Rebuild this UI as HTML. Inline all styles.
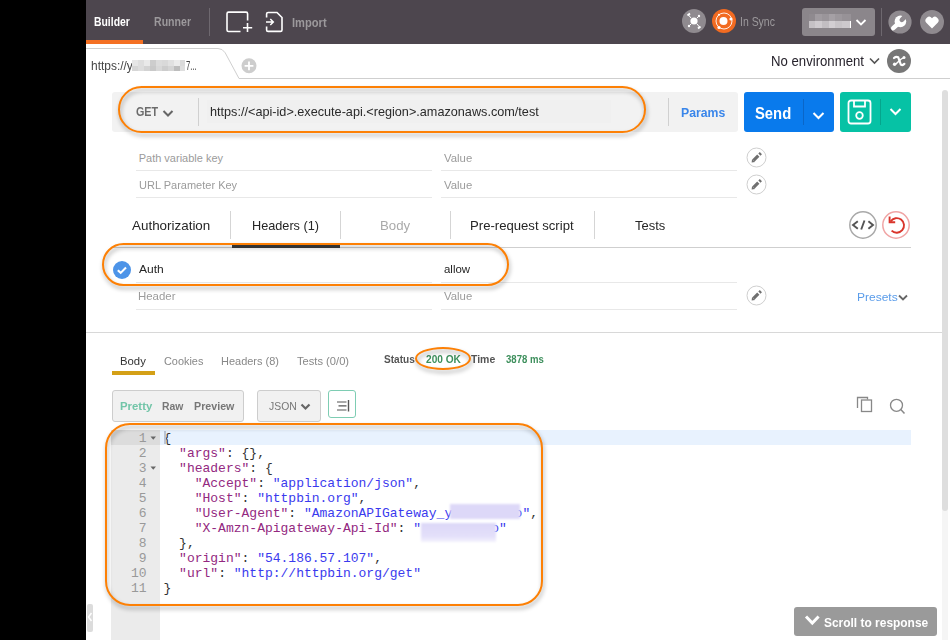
<!DOCTYPE html><html><head><meta charset="utf-8"><style>
html,body{margin:0;padding:0;width:950px;height:640px;overflow:hidden;background:#fff;position:relative;font-family:"Liberation Sans",sans-serif;}
.t{position:absolute;white-space:pre;line-height:1;}
.r{position:absolute;}
.ln{position:absolute;left:111px;width:35.6px;text-align:right;font-family:"Liberation Mono",monospace;font-size:13px;line-height:15px;color:#999;}
.cl{position:absolute;left:163.5px;font-family:"Liberation Mono",monospace;font-size:13px;line-height:15px;white-space:pre;}
.ann{position:absolute;box-sizing:border-box;border:3px solid #fd8005;filter:drop-shadow(1px 3px 2px rgba(0,0,0,.35));}
</style></head><body><div class="r" style="left:0px;top:0px;width:86px;height:640px;background:#000;"></div>
<div class="r" style="left:86px;top:0px;width:864px;height:44px;background:#4d464e;"></div>
<div class="r" style="left:86px;top:40px;width:57px;height:4px;background:#f47023;"></div>
<div class="t" style="left:94.40px;top:15.80px;font-size:12px;color:#fff;font-weight:bold;transform:scaleX(0.8667);transform-origin:0 0;">Builder</div>
<div class="t" style="left:154.00px;top:15.80px;font-size:12px;color:#9c999c;font-weight:bold;transform:scaleX(0.8810);transform-origin:0 0;">Runner</div>
<div class="r" style="left:209px;top:8px;width:1px;height:28px;background:#6e686f;"></div>
<svg style="position:absolute;left:224px;top:10px;" width="30" height="26" viewBox="0 0 30 26"><path d="M23.6 10.5 V3.7 a1.6 1.6 0 0 0 -1.6 -1.6 H4.6 a1.6 1.6 0 0 0 -1.6 1.6 V19.9 a1.6 1.6 0 0 0 1.6 1.6 H16.5" fill="none" stroke="#fff" stroke-width="1.6"/><path d="M23.5 13 V22 M19 17.8 H28.2" stroke="#fff" stroke-width="1.6"/></svg>
<svg style="position:absolute;left:262px;top:10px;" width="24" height="26" viewBox="0 0 24 26"><path d="M4.6 7.5 V4 a1.5 1.5 0 0 1 1.5 -1.5 H15 L20 7.5 V19.9 a1.5 1.5 0 0 1 -1.5 1.5 H6.1 a1.5 1.5 0 0 1 -1.5 -1.5 V16.5" fill="none" stroke="#fff" stroke-width="1.6"/><path d="M4 12 H11.3 M8.3 9 L11.3 12 L8.3 15" fill="none" stroke="#fff" stroke-width="1.5"/></svg>
<div class="t" style="left:291.70px;top:16.50px;font-size:12px;color:#9c999c;font-weight:bold;transform:scaleX(0.9270);transform-origin:0 0;">Import</div>
<svg style="position:absolute;left:682px;top:9px;" width="24" height="24" viewBox="0 0 24 24"><circle cx="12" cy="12" r="12" fill="#8f8a8f"/><circle cx="12" cy="12" r="3.6" fill="#fff"/><path d="M5.5 6.5 L8 4.5 M16 19.5 L18.5 17.5" stroke="#fff" stroke-width="2"/><path d="M9 9 L6.5 6 M15 15 L17.5 18 M15 9 L17 7 M9 15 L7 17" stroke="#fff" stroke-width="1"/><circle cx="17" cy="7" r="1.2" fill="#fff"/><circle cx="7" cy="17" r="1.2" fill="#fff"/></svg>
<svg style="position:absolute;left:712px;top:9px;" width="24" height="24" viewBox="0 0 24 24"><circle cx="12" cy="12" r="12" fill="#f26b21"/><circle cx="12" cy="12" r="8" fill="none" stroke="#fff" stroke-width="0.9"/><circle cx="11.5" cy="12" r="4" fill="#fff"/><circle cx="19" cy="10" r="1.6" fill="#fff"/><circle cx="7" cy="18.5" r="1.6" fill="#fff"/><circle cx="7" cy="5.8" r="1" fill="#fff"/></svg>
<div class="t" style="left:739.93px;top:16.00px;font-size:12px;color:#9c999c;font-weight:normal;transform:scaleX(0.8718);transform-origin:0 0;">In Sync</div>
<div class="r" style="left:802px;top:8px;width:73px;height:28px;background:#8b868b;border-radius:3px;"></div>
<div class="r" style="left:809px;top:14px;width:42px;height:7px;background:linear-gradient(90deg,#8f8a8f 0 6px,#a09ba0 6px 13px,#9a959a 13px 20px,#a5a0a5 20px 26px,#9d989d 26px 33px,#979297 33px 42px)"></div>
<div class="r" style="left:809px;top:21px;width:42px;height:7px;background:linear-gradient(90deg,#c5c1c5 0 6px,#cfcbcf 6px 13px,#c2bec2 13px 20px,#d2ced2 20px 26px,#c8c4c8 26px 33px,#cdc9cd 33px 41px,#fff 41px 42px)"></div>
<svg style="position:absolute;left:855px;top:18px;" width="12" height="9" viewBox="0 0 12 9"><path d="M1.5 2 L6 6.5 L10.5 2" fill="none" stroke="#fff" stroke-width="1.8"/></svg>
<div class="r" style="left:881px;top:8px;width:1px;height:28px;background:#6e686f;"></div>
<svg style="position:absolute;left:888px;top:10px;" width="24" height="24" viewBox="0 0 24 24"><circle cx="12" cy="12" r="11.6" fill="#8f8a8f"/><path d="M5.2 18.2 L11.5 12.5" stroke="#fff" stroke-width="4.4" stroke-linecap="round"/><circle cx="12.4" cy="11.4" r="5.8" fill="#fff"/><path d="M13.8 9.8 L17.6 6" stroke="#8f8a8f" stroke-width="4.6" stroke-linecap="round"/></svg>
<svg style="position:absolute;left:920px;top:10px;" width="24" height="24" viewBox="0 0 24 24"><circle cx="12" cy="12" r="12" fill="#8f8a8f"/><path d="M12 18.5 L6.3 12.8 a3.3 3.3 0 0 1 5.7 -4.6 a3.3 3.3 0 0 1 5.7 4.6 Z" fill="#fff"/></svg>
<svg style="position:absolute;left:86px;top:44px;" width="864" height="40" viewBox="0 0 864 40"><path d="M0 4.5 H132 Q136.5 4.5 139.2 8.8 L153 34.5 H864" fill="none" stroke="#cfcfcf" stroke-width="1"/></svg>
<div class="t" style="left:91.20px;top:60.00px;font-size:12px;color:#444;font-weight:normal;transform:scaleX(0.9951);transform-origin:0 0;">https://y</div>
<div class="r" style="left:132px;top:60px;width:6px;height:5.5px;background:#e6e6e6;"></div>
<div class="r" style="left:132px;top:65.5px;width:6px;height:5.5px;background:#d6d6d6;"></div>
<div class="r" style="left:138px;top:60px;width:6px;height:5.5px;background:#dedede;"></div>
<div class="r" style="left:138px;top:65.5px;width:6px;height:5.5px;background:#dddddd;"></div>
<div class="r" style="left:144px;top:60px;width:6px;height:5.5px;background:#e9e9e9;"></div>
<div class="r" style="left:144px;top:65.5px;width:6px;height:5.5px;background:#d3d3d3;"></div>
<div class="r" style="left:150px;top:60px;width:6px;height:5.5px;background:#cdcdcd;"></div>
<div class="r" style="left:150px;top:65.5px;width:6px;height:5.5px;background:#c9c9c9;"></div>
<div class="r" style="left:156px;top:60px;width:6px;height:5.5px;background:#dcdcdc;"></div>
<div class="r" style="left:156px;top:65.5px;width:6px;height:5.5px;background:#d8d8d8;"></div>
<div class="r" style="left:162px;top:60px;width:6px;height:5.5px;background:#d9d9d9;"></div>
<div class="r" style="left:162px;top:65.5px;width:6px;height:5.5px;background:#cdcdcd;"></div>
<div class="r" style="left:168px;top:60px;width:6px;height:5.5px;background:#e1e1e1;"></div>
<div class="r" style="left:168px;top:65.5px;width:6px;height:5.5px;background:#d5d5d5;"></div>
<div class="r" style="left:174px;top:60px;width:6px;height:5.5px;background:#ececec;"></div>
<div class="r" style="left:174px;top:65.5px;width:6px;height:5.5px;background:#bdbdbd;"></div>
<div class="r" style="left:180px;top:60px;width:5px;height:5.5px;background:#dadada;"></div>
<div class="r" style="left:180px;top:65.5px;width:5px;height:5.5px;background:#dedede;"></div>
<div class="t" style="left:185.50px;top:60.00px;font-size:12px;color:#444;font-weight:normal;transform:scaleX(0.6438);transform-origin:0 0;">7...</div>
<svg style="position:absolute;left:240.5px;top:57.5px;" width="16" height="16" viewBox="0 0 16 16"><circle cx="8" cy="7.8" r="7.5" fill="#cdcdcd"/><path d="M8 3.4 V12.2 M3.6 7.8 H12.4" stroke="#fff" stroke-width="1.8"/></svg>
<div class="t" style="left:771.46px;top:54.00px;font-size:14px;color:#27232c;font-weight:normal;transform:scaleX(0.9408);transform-origin:0 0;">No environment</div>
<svg style="position:absolute;left:869px;top:57px;" width="12" height="8" viewBox="0 0 12 8"><path d="M1 1.5 L5.5 6 L10 1.5" fill="none" stroke="#555" stroke-width="1.6"/></svg>
<svg style="position:absolute;left:887px;top:49px;" width="24" height="24" viewBox="0 0 24 24"><circle cx="12" cy="12" r="12" fill="#777"/><path d="M7 9 Q9 7.2 11.2 8.2 L13.8 15.6 Q15.8 16.8 17.4 14.8" fill="none" stroke="#fff" stroke-width="2.2" stroke-linecap="round"/><path d="M17 8.6 Q14 9.5 12 12 L9.2 14.8" fill="none" stroke="#fff" stroke-width="1.5" stroke-linecap="round"/><circle cx="17" cy="8.6" r="1.5" fill="#fff"/><circle cx="7.6" cy="15.2" r="1.7" fill="#fff"/></svg>
<div class="r" style="left:112px;top:92px;width:626px;height:40px;background:#f2f2f2;border-radius:3px;"></div>
<div class="r" style="left:207px;top:100px;width:404px;height:23px;background:#f0f0f0;"></div>
<div class="t" style="left:135.60px;top:105.60px;font-size:12px;color:#6b6b6b;font-weight:bold;transform:scaleX(0.8960);transform-origin:0 0;">GET</div>
<svg style="position:absolute;left:162px;top:109px;" width="12" height="9" viewBox="0 0 12 9"><path d="M1.5 2 L6 6.5 L10.5 2" fill="none" stroke="#666" stroke-width="2"/></svg>
<div class="r" style="left:198px;top:98px;width:1px;height:28px;background:#d0d0d0;"></div>
<div class="t" style="left:209.73px;top:104.60px;font-size:13px;color:#2a2a2a;font-weight:normal;transform:scaleX(0.9742);transform-origin:0 0;">https://&lt;api-id&gt;.execute-api.&lt;region&gt;.amazonaws.com/test</div>
<div class="r" style="left:668px;top:98px;width:1px;height:28px;background:#d0d0d0;"></div>
<div class="t" style="left:680.76px;top:105.50px;font-size:13px;color:#3a86ea;font-weight:bold;transform:scaleX(0.9413);transform-origin:0 0;">Params</div>
<div class="r" style="left:744px;top:92px;width:90px;height:40px;background:#097aec;border-radius:3px;"></div>
<div class="t" style="left:755.40px;top:105.00px;font-size:17px;color:#fff;font-weight:bold;transform:scaleX(0.8707);transform-origin:0 0;">Send</div>
<div class="r" style="left:803px;top:99px;width:1px;height:26px;background:#0a66c8;"></div>
<svg style="position:absolute;left:812px;top:110.5px;" width="13" height="10" viewBox="0 0 13 10"><path d="M1.5 2 L6.5 7 L11.5 2" fill="none" stroke="#fff" stroke-width="2"/></svg>
<div class="r" style="left:840px;top:92px;width:71px;height:40px;background:#06c2a5;border-radius:3px;"></div>
<svg style="position:absolute;left:846px;top:98px;" width="28" height="28" viewBox="0 0 28 28"><rect x="2.5" y="2.5" width="22" height="23" rx="2.5" fill="none" stroke="#fff" stroke-width="1.8"/><path d="M8 2.5 V8.5 H19 V2.5" fill="none" stroke="#fff" stroke-width="1.8"/><circle cx="13.5" cy="17.5" r="3.3" fill="none" stroke="#fff" stroke-width="1.8"/></svg>
<div class="r" style="left:880px;top:99px;width:1px;height:26px;background:#05a58c;"></div>
<svg style="position:absolute;left:889px;top:107px;" width="13" height="10" viewBox="0 0 13 10"><path d="M1.5 2 L6.5 7 L11.5 2" fill="none" stroke="#fff" stroke-width="2"/></svg>
<div class="r" style="left:942px;top:330px;width:6px;height:310px;background:#f5f5f5;"></div>
<div class="r" style="left:942px;top:90px;width:6px;height:421px;background:#dedede;border-radius:3px;"></div>
<div class="t" style="left:138.70px;top:152.80px;font-size:11px;color:#9b9b9b;font-weight:normal;transform:scaleX(1.0000);transform-origin:0 0;">Path variable key</div>
<div class="t" style="left:444.30px;top:152.80px;font-size:11px;color:#9b9b9b;font-weight:normal;transform:scaleX(1.0333);transform-origin:0 0;">Value</div>
<div class="r" style="left:136px;top:170px;width:296px;height:1px;background:#e8e8e8;"></div>
<div class="r" style="left:441px;top:170px;width:296px;height:1px;background:#e8e8e8;"></div>
<div class="t" style="left:138.70px;top:179.70px;font-size:11px;color:#9b9b9b;font-weight:normal;transform:scaleX(1.0010);transform-origin:0 0;">URL Parameter Key</div>
<div class="t" style="left:444.30px;top:179.70px;font-size:11px;color:#9b9b9b;font-weight:normal;transform:scaleX(1.0333);transform-origin:0 0;">Value</div>
<div class="r" style="left:136px;top:197px;width:296px;height:1px;background:#e8e8e8;"></div>
<div class="r" style="left:441px;top:197px;width:296px;height:1px;background:#e8e8e8;"></div>
<svg style="position:absolute;left:745.8px;top:146.8px;" width="21" height="21" viewBox="0 0 21 21"><circle cx="10.5" cy="10.5" r="9.5" fill="#fff" stroke="#cfcfcf" stroke-width="1"/><path d="M7.6 13.4 L12.3 8.7" stroke="#6f6f6f" stroke-width="3.2"/><path d="M13.4 7.6 L14.9 6.1" stroke="#6f6f6f" stroke-width="3"/><path d="M5.6 15.4 L6.1 11.9 L9.1 14.9 Z" fill="#6f6f6f"/></svg>
<svg style="position:absolute;left:745.8px;top:173.7px;" width="21" height="21" viewBox="0 0 21 21"><circle cx="10.5" cy="10.5" r="9.5" fill="#fff" stroke="#cfcfcf" stroke-width="1"/><path d="M7.6 13.4 L12.3 8.7" stroke="#6f6f6f" stroke-width="3.2"/><path d="M13.4 7.6 L14.9 6.1" stroke="#6f6f6f" stroke-width="3"/><path d="M5.6 15.4 L6.1 11.9 L9.1 14.9 Z" fill="#6f6f6f"/></svg>
<div class="t" style="left:131.60px;top:219.30px;font-size:13px;color:#262626;font-weight:normal;transform:scaleX(1.0316);transform-origin:0 0;">Authorization</div>
<div class="t" style="left:252.02px;top:219.30px;font-size:13px;color:#262626;font-weight:normal;transform:scaleX(0.9761);transform-origin:0 0;">Headers (1)</div>
<div class="t" style="left:379.98px;top:219.30px;font-size:13px;color:#aaa;font-weight:normal;transform:scaleX(1.0172);transform-origin:0 0;">Body</div>
<div class="t" style="left:469.99px;top:219.30px;font-size:13px;color:#262626;font-weight:normal;transform:scaleX(1.0098);transform-origin:0 0;">Pre-request script</div>
<div class="t" style="left:634.80px;top:219.30px;font-size:13px;color:#262626;font-weight:normal;transform:scaleX(0.9967);transform-origin:0 0;">Tests</div>
<div class="r" style="left:230px;top:211px;width:1px;height:28px;background:#d5d5d5;"></div>
<div class="r" style="left:340px;top:211px;width:1px;height:28px;background:#d5d5d5;"></div>
<div class="r" style="left:450px;top:211px;width:1px;height:28px;background:#d5d5d5;"></div>
<div class="r" style="left:594px;top:211px;width:1px;height:28px;background:#d5d5d5;"></div>
<div class="r" style="left:112px;top:246.5px;width:799px;height:1.0px;background:#cfcfcf;"></div>
<div class="r" style="left:232px;top:245px;width:108px;height:3px;background:#3a3a3a;"></div>
<svg style="position:absolute;left:848px;top:210px;" width="30" height="30" viewBox="0 0 30 30"><circle cx="15" cy="15" r="13.2" fill="#fff" stroke="#a9a9a9" stroke-width="1.5"/><path d="M9.8 11.2 L5 15 L9.8 18.8 M20.4 11.2 L25 15 L20.4 18.8 M16.5 10.5 L13.2 19.5" fill="none" stroke="#555" stroke-width="1.9"/></svg>
<svg style="position:absolute;left:881px;top:210px;" width="30" height="30" viewBox="0 0 30 30"><circle cx="15" cy="15" r="13.2" fill="#fff" stroke="#f0a5a5" stroke-width="1.5"/><path d="M9.6 11.4 A7.3 7.3 0 1 1 10.6 20.6" fill="none" stroke="#d9352b" stroke-width="1.9"/><path d="M8.6 6.6 V12.2 H14.2" fill="none" stroke="#d9352b" stroke-width="1.9"/></svg>
<svg style="position:absolute;left:112px;top:260px;" width="20" height="20" viewBox="0 0 20 20"><circle cx="10" cy="10" r="9" fill="#4d94e8"/><path d="M5.8 10.3 L8.7 12.9 L14 7.6" fill="none" stroke="#fff" stroke-width="2.1"/></svg>
<div class="t" style="left:139.30px;top:264.00px;font-size:11px;color:#262626;font-weight:normal;transform:scaleX(1.0955);transform-origin:0 0;">Auth</div>
<div class="t" style="left:444.30px;top:264.00px;font-size:11px;color:#262626;font-weight:normal;transform:scaleX(1.0400);transform-origin:0 0;">allow</div>
<div class="r" style="left:136px;top:282px;width:296px;height:1px;background:#e8e8e8;"></div>
<div class="r" style="left:441px;top:282px;width:296px;height:1px;background:#e8e8e8;"></div>
<div class="t" style="left:138.26px;top:291.00px;font-size:11px;color:#9b9b9b;font-weight:normal;transform:scaleX(1.0400);transform-origin:0 0;">Header</div>
<div class="t" style="left:444.30px;top:290.60px;font-size:11px;color:#9b9b9b;font-weight:normal;transform:scaleX(1.0333);transform-origin:0 0;">Value</div>
<div class="r" style="left:136px;top:309px;width:296px;height:1px;background:#e8e8e8;"></div>
<div class="r" style="left:441px;top:309px;width:296px;height:1px;background:#e8e8e8;"></div>
<svg style="position:absolute;left:745.8px;top:284.7px;" width="21" height="21" viewBox="0 0 21 21"><circle cx="10.5" cy="10.5" r="9.5" fill="#fff" stroke="#cfcfcf" stroke-width="1"/><path d="M7.6 13.4 L12.3 8.7" stroke="#6f6f6f" stroke-width="3.2"/><path d="M13.4 7.6 L14.9 6.1" stroke="#6f6f6f" stroke-width="3"/><path d="M5.6 15.4 L6.1 11.9 L9.1 14.9 Z" fill="#6f6f6f"/></svg>
<div class="t" style="left:856.61px;top:291.60px;font-size:11px;color:#5a9cea;font-weight:normal;transform:scaleX(1.0917);transform-origin:0 0;">Presets</div>
<svg style="position:absolute;left:898px;top:294px;" width="11" height="8" viewBox="0 0 11 8"><path d="M1 1.5 L5 5.5 L9 1.5" fill="none" stroke="#666" stroke-width="1.8"/></svg>
<div class="r" style="left:86px;top:332px;width:856px;height:1px;background:#d8d8d8;"></div>
<div class="t" style="left:120.27px;top:355.60px;font-size:11px;color:#333;font-weight:normal;transform:scaleX(1.0292);transform-origin:0 0;">Body</div>
<div class="t" style="left:163.80px;top:355.60px;font-size:11px;color:#888;font-weight:normal;transform:scaleX(0.9900);transform-origin:0 0;">Cookies</div>
<div class="t" style="left:220.50px;top:355.60px;font-size:11px;color:#888;font-weight:normal;transform:scaleX(0.9982);transform-origin:0 0;">Headers (8)</div>
<div class="t" style="left:296.80px;top:355.60px;font-size:11px;color:#888;font-weight:normal;transform:scaleX(1.0137);transform-origin:0 0;">Tests (0/0)</div>
<div class="r" style="left:112px;top:371px;width:43px;height:4px;background:#d4a017;"></div>
<div class="t" style="left:384.40px;top:354.20px;font-size:11px;color:#555;font-weight:bold;transform:scaleX(0.9147);transform-origin:0 0;">Status</div>
<div class="t" style="left:426.00px;top:354.20px;font-size:11px;color:#3d8f5c;font-weight:bold;transform:scaleX(0.9211);transform-origin:0 0;">200 OK</div>
<div class="t" style="left:471.00px;top:354.20px;font-size:11px;color:#555;font-weight:bold;transform:scaleX(0.9520);transform-origin:0 0;">Time</div>
<div class="t" style="left:505.70px;top:355.20px;font-size:10px;color:#3d8f5c;font-weight:bold;transform:scaleX(0.9575);transform-origin:0 0;">3878 ms</div>
<div class="r" style="left:112px;top:390px;width:132px;height:32px;background:#f1f1f1;border:1px solid #cdcdcd;border-radius:3px;box-sizing:border-box;"></div>
<div class="t" style="left:120.00px;top:400.70px;font-size:11px;color:#72c5a8;font-weight:bold;transform:scaleX(1.0355);transform-origin:0 0;">Pretty</div>
<div class="t" style="left:162.00px;top:400.70px;font-size:11px;color:#777;font-weight:bold;transform:scaleX(0.9435);transform-origin:0 0;">Raw</div>
<div class="t" style="left:194.40px;top:400.70px;font-size:11px;color:#777;font-weight:bold;transform:scaleX(0.9714);transform-origin:0 0;">Preview</div>
<div class="r" style="left:257px;top:390px;width:64px;height:32px;background:#f1f1f1;border:1px solid #cdcdcd;border-radius:3px;box-sizing:border-box;"></div>
<div class="t" style="left:268.80px;top:400.80px;font-size:11px;color:#777;font-weight:normal;transform:scaleX(0.9448);transform-origin:0 0;">JSON</div>
<svg style="position:absolute;left:300px;top:403px;" width="12" height="8" viewBox="0 0 12 8"><path d="M1.5 1.5 L5.5 5.5 L9.5 1.5" fill="none" stroke="#666" stroke-width="2.2"/></svg>
<div class="r" style="left:328px;top:390px;width:28px;height:28px;background:#fff;border:1px solid #7ecdb3;border-radius:3px;box-sizing:border-box;"></div>
<svg style="position:absolute;left:336px;top:399px;" width="15" height="14" viewBox="0 0 15 14"><path d="M1 3 H10.5 M2.5 6.8 H10.5 M1 11 H10.5" stroke="#555" stroke-width="1.2"/><path d="M12.5 1 V12.5" stroke="#555" stroke-width="1.4"/></svg>
<svg style="position:absolute;left:856px;top:396px;" width="17" height="17" viewBox="0 0 17 17"><path d="M1.5 12 V1.5 H11.5 V3.5" fill="none" stroke="#888" stroke-width="1.3"/><rect x="5.5" y="4" width="10" height="11.5" fill="#fff" stroke="#888" stroke-width="1.3"/></svg>
<svg style="position:absolute;left:888px;top:397px;" width="18" height="18" viewBox="0 0 18 18"><circle cx="8.5" cy="8.3" r="6" fill="none" stroke="#888" stroke-width="1.3"/><path d="M12.8 12.6 L16.5 16.5" stroke="#888" stroke-width="1.5"/></svg>
<div class="r" style="left:111px;top:430px;width:49px;height:210px;background:#ebebeb;"></div>
<div class="r" style="left:111px;top:430px;width:49px;height:15px;background:#dcdcdc;"></div>
<div class="r" style="left:160px;top:430px;width:751px;height:15px;background:#e8f2fe;"></div>
<div class="ln" style="top:431px">1</div>
<div class="cl" style="top:431px"><span style="color:#333">{</span></div>
<div class="ln" style="top:446px">2</div>
<div class="cl" style="top:446px"><span style="color:#333">  </span><span style="color:#93287f">&quot;args&quot;</span><span style="color:#333">: {},</span></div>
<div class="ln" style="top:461px">3</div>
<div class="cl" style="top:461px"><span style="color:#333">  </span><span style="color:#93287f">&quot;headers&quot;</span><span style="color:#333">: {</span></div>
<div class="ln" style="top:476px">4</div>
<div class="cl" style="top:476px"><span style="color:#333">    </span><span style="color:#93287f">&quot;Accept&quot;</span><span style="color:#333">: </span><span style="color:#3a3aee">&quot;application/json&quot;</span><span style="color:#333">,</span></div>
<div class="ln" style="top:491px">5</div>
<div class="cl" style="top:491px"><span style="color:#333">    </span><span style="color:#93287f">&quot;Host&quot;</span><span style="color:#333">: </span><span style="color:#3a3aee">&quot;httpbin.org&quot;</span><span style="color:#333">,</span></div>
<div class="ln" style="top:506px">6</div>
<div class="cl" style="top:506px"><span style="color:#333">    </span><span style="color:#93287f">&quot;User-Agent&quot;</span><span style="color:#333">: </span><span style="color:#3a3aee">&quot;AmazonAPIGateway_y        o&quot;</span><span style="color:#333">,</span></div>
<div class="ln" style="top:521px">7</div>
<div class="cl" style="top:521px"><span style="color:#333">    </span><span style="color:#93287f">&quot;X-Amzn-Apigateway-Api-Id&quot;</span><span style="color:#333">: </span><span style="color:#3a3aee">&quot;         o&quot;</span></div>
<div class="ln" style="top:536px">8</div>
<div class="cl" style="top:536px"><span style="color:#333">  },</span></div>
<div class="ln" style="top:551px">9</div>
<div class="cl" style="top:551px"><span style="color:#333">  </span><span style="color:#93287f">&quot;origin&quot;</span><span style="color:#333">: </span><span style="color:#3a3aee">&quot;54.186.57.107&quot;</span><span style="color:#333">,</span></div>
<div class="ln" style="top:566px">10</div>
<div class="cl" style="top:566px"><span style="color:#333">  </span><span style="color:#93287f">&quot;url&quot;</span><span style="color:#333">: </span><span style="color:#3a3aee">&quot;http://httpbin.org/get&quot;</span></div>
<div class="ln" style="top:581px">11</div>
<div class="cl" style="top:581px"><span style="color:#333">}</span></div>
<svg style="position:absolute;left:150px;top:436px;" width="7" height="5" viewBox="0 0 7 5"><path d="M0.5 0.5 H6 L3.25 3.8 Z" fill="#666"/></svg>
<svg style="position:absolute;left:150px;top:466px;" width="7" height="5" viewBox="0 0 7 5"><path d="M0.5 0.5 H6 L3.25 3.8 Z" fill="#666"/></svg>
<div class="r" style="left:164px;top:431px;width:2px;height:13px;background:#b9c3d3;"></div>
<div class="r" style="left:450px;top:504px;width:70px;height:15px;background:#ddd8f8;filter:blur(0.8px)"></div>
<div class="r" style="left:421px;top:523px;width:75px;height:19px;background:linear-gradient(#dcd7f8,#e4e0fa 70%,#f4f2fd);filter:blur(0.8px)"></div>
<div class="r" style="left:87px;top:604px;width:6px;height:28px;background:#dcdcdc;border-radius:2px;"></div>
<svg style="position:absolute;left:87px;top:612px;" width="6" height="10" viewBox="0 0 6 10"><path d="M4.5 1 L1.5 5 L4.5 9" fill="none" stroke="#fff" stroke-width="1.5"/></svg>
<div class="r" style="left:794px;top:607px;width:143px;height:29px;background:#9a9a9a;border-radius:3px;"></div>
<svg style="position:absolute;left:804px;top:614px;" width="17" height="13" viewBox="0 0 17 13"><path d="M2 2.5 L8.3 9 L14.6 2.5" fill="none" stroke="#fff" stroke-width="3"/></svg>
<div class="t" style="left:824.40px;top:615.50px;font-size:13px;color:#fff;font-weight:bold;transform:scaleX(0.9186);transform-origin:0 0;">Scroll to response</div>
<div class="ann" style="left:118px;top:85.5px;width:528.2px;height:47.5px;border-radius:23.5px;border-width:2.7px"></div>
<div class="ann" style="left:102px;top:243px;width:407px;height:43px;border-radius:21.5px;border-width:2.3px"></div>
<div class="ann" style="left:415px;top:347.3px;width:55.80000000000001px;height:23.0px;border-radius:28px/11.5px;border-width:2.8px"></div>
<div class="ann" style="left:105px;top:423px;width:438px;height:183px;border-radius:25px;border-width:2.5px"></div></body></html>
